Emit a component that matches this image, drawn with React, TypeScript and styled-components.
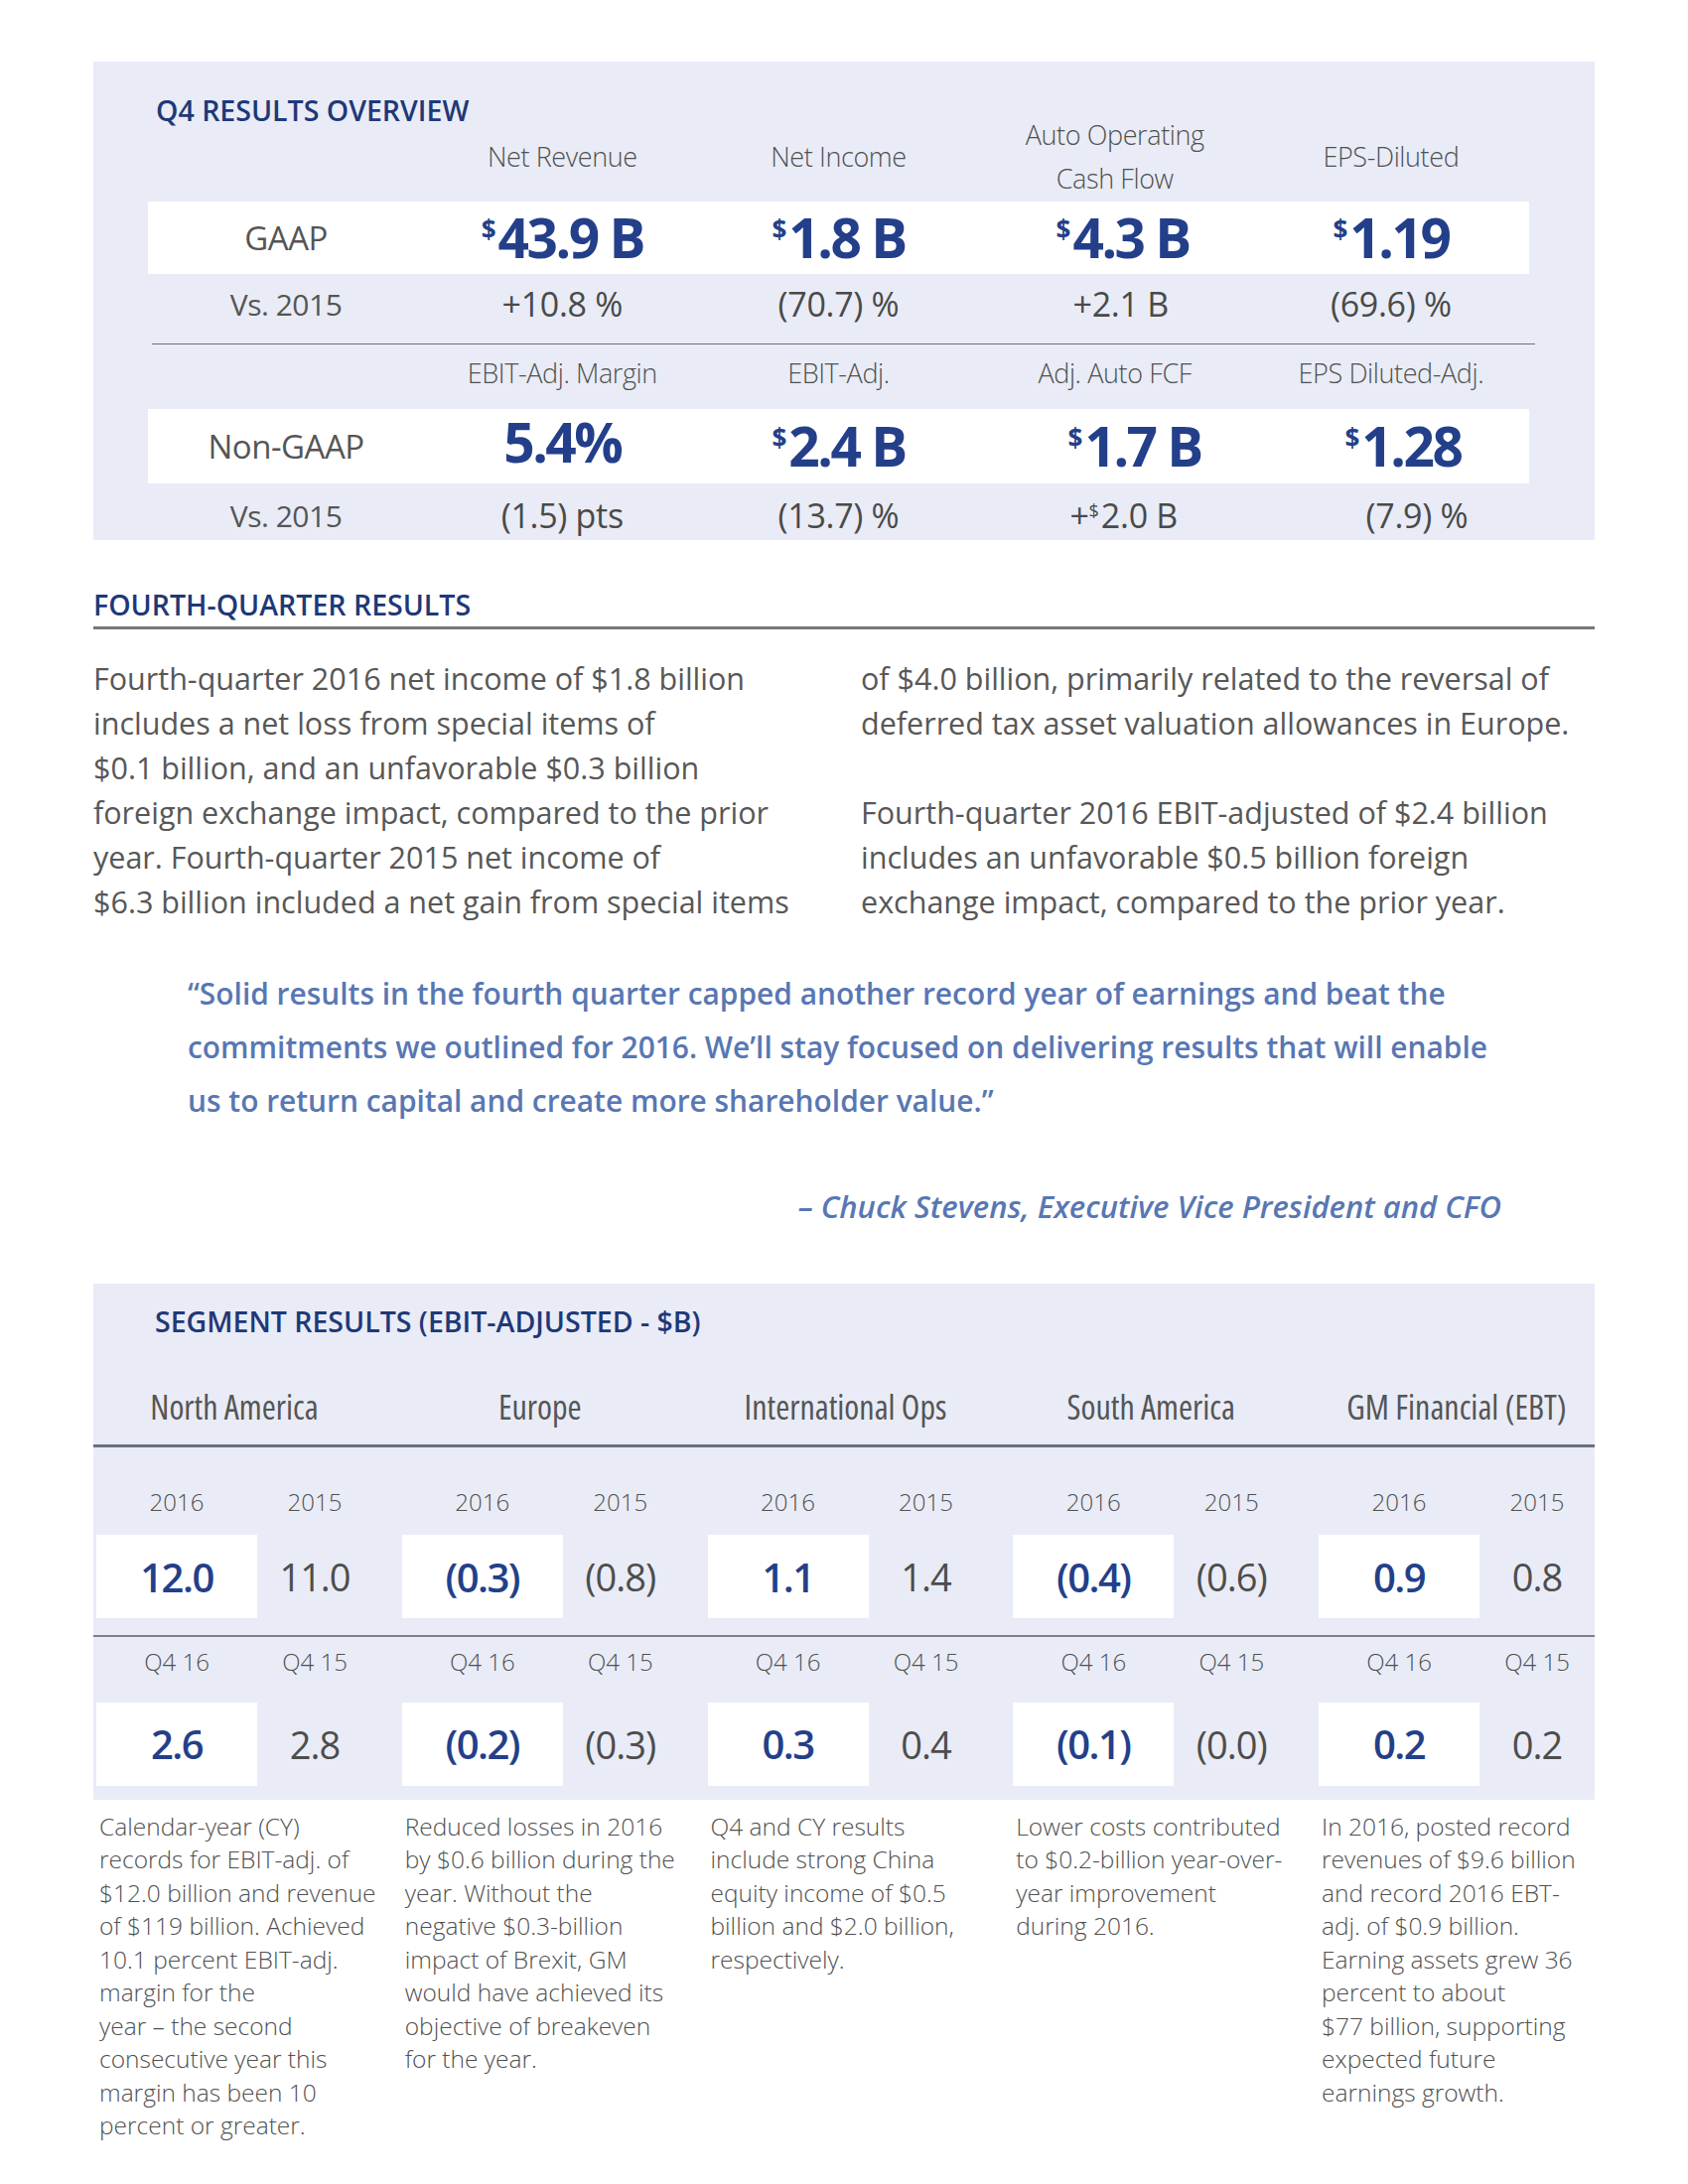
import React from "react";
import styled, { createGlobalStyle } from "styled-components";

const GlobalStyle = createGlobalStyle`
  html, body { margin: 0; padding: 0; background: #ffffff; }
  body { font-family: "Open Sans", "Noto Sans", sans-serif; color: #555555; }
  * { box-sizing: border-box; }
`;

const NAVY = "#1f3878";
const VALUE = "#243f8a";
const QUOTE = "#5877b3";
const GRAY = "#555555";
const PANEL = "#e9ecf6";

const Page = styled.div`
  width: 1700px;
  padding: 62px 94px 40px 94px;
`;

/* ---------- Overview panel ---------- */
const Panel = styled.section`
  background: ${PANEL};
  padding: 34px 66px 0 55px;
  height: 482px;
`;

const PanelTitle = styled.h2<{ $indent?: number }>`
  margin: 0;
  padding-left: ${(p) => p.$indent ?? 8}px;
  font-family: "Open Sans", sans-serif;
  font-weight: 600;
  font-size: 28.5px;
  line-height: 30px;
  letter-spacing: 0;
  color: ${NAVY};
`;

const Grid5 = styled.div`
  display: grid;
  grid-template-columns: repeat(5, 1fr);
  align-items: center;
`;

const HeaderRow = styled(Grid5)<{ $h: number; $mb: number }>`
  height: ${(p) => p.$h}px;
  grid-template-rows: ${(p) => p.$h}px;
  margin-bottom: ${(p) => p.$mb}px;
`;

const HeadLabel = styled.div`
  text-align: center;
  font-weight: 300;
  font-size: 27px;
  line-height: 44px;
  color: #505050;
  letter-spacing: -0.4px;
`;

const ValueRow = styled(Grid5)<{ $h: number }>`
  background: #ffffff;
  height: ${(p) => p.$h}px;
  grid-template-rows: ${(p) => p.$h}px;
`;

const RowLabel = styled.div<{ $size: number }>`
  text-align: center;
  font-size: ${(p) => p.$size}px;
  font-weight: 400;
  color: ${GRAY};
  letter-spacing: -0.5px;
`;

const BigValue = styled.div<{ $shift?: number }>`
  text-align: center;
  padding-left: ${(p) => (p.$shift ?? 0) * 2}px;
  padding-bottom: 10px;
  font-weight: 700;
  font-size: 55px;
  line-height: 62px;
  letter-spacing: -2.5px;
  color: ${VALUE};
`;

const Sup = styled.span<{ $size: number; $raise: number }>`
  font-size: ${(p) => p.$size}px;
  vertical-align: ${(p) => p.$raise}px;
  letter-spacing: 0;
  margin-right: 2px;
`;

const CompareRow = styled(Grid5)<{ $h: number; $pt?: number }>`
  height: ${(p) => p.$h}px;
  padding-top: ${(p) => p.$pt ?? 0}px;
`;

const CompareValue = styled.div<{ $shift?: number }>`
  text-align: center;
  padding-left: ${(p) => (p.$shift ?? 0) * 2}px;
  font-size: 34px;
  font-weight: 400;
  color: #4a4a4a;
  letter-spacing: -0.3px;
`;

const Divider = styled.hr`
  border: 0;
  height: 1px;
  background: #6f7080;
  margin: 10px -6px 0 4px;
`;

/* ---------- Fourth quarter ---------- */
const SectionHeading = styled.h2`
  margin: 48px 0 0 0;
  padding: 0 0 5px 0;
  border-bottom: 3px solid #777777;
  font-weight: 600;
  font-size: 28.5px;
  line-height: 34px;
  color: ${NAVY};
`;

const BodyColumns = styled.div`
  display: grid;
  grid-template-columns: 773px 1fr;
  margin-top: 27px;
`;

const BodyText = styled.p<{ $gap?: number }>`
  margin: ${(p) => p.$gap ?? 0}px 0 0 0;
  font-size: 30.5px;
  line-height: 45px;
  font-weight: 400;
  color: #575757;
  white-space: nowrap;
`;

const Quote = styled.blockquote`
  margin: 43px 0 0 0;
  padding-left: 95px;
  font-weight: 600;
  font-size: 29.9px;
  line-height: 54px;
  color: ${QUOTE};
  white-space: nowrap;
`;

const Attribution = styled.p`
  margin: 59px 0 0 0;
  padding-right: 94px;
  text-align: right;
  font-weight: 600;
  font-style: italic;
  font-size: 31px;
  line-height: 40px;
  color: ${QUOTE};
`;

/* ---------- Segment panel ---------- */
const SegPanel = styled.section`
  margin-top: 58px;
  background: ${PANEL};
  padding-top: 23px;
`;

const SegGrid = styled.div`
  display: grid;
  grid-template-columns: repeat(5, 278px);
  column-gap: 29.75px;
  padding-left: 3px;
`;

const RegionRow = styled(SegGrid)`
  margin-top: 45px;
  height: 52px;
  align-items: center;
`;

const RegionName = styled.div`
  text-align: center;
  font-stretch: 75%;
  font-weight: 400;
  font-size: 34px;
  color: ${GRAY};
`;

const SegRule = styled.hr<{ $thick?: boolean }>`
  border: 0;
  margin: ${(p) => (p.$thick ? "12px 0 0 0" : "0")};
  height: ${(p) => (p.$thick ? 3 : 1.5)}px;
  background: ${(p) => (p.$thick ? "#6b6e7c" : "#7d7f8c")};
`;

const PeriodBlock = styled(SegGrid)<{ $pt: number; $pb: number }>`
  padding-top: ${(p) => p.$pt}px;
  padding-bottom: ${(p) => p.$pb}px;
`;

const Pair = styled.div<{ $gap: number }>`
  display: grid;
  grid-template-columns: 162px 116px;
  grid-template-rows: 34px 84px;
  row-gap: ${(p) => p.$gap}px;
  align-items: center;
`;

const YearLabel = styled.div`
  text-align: center;
  font-weight: 300;
  font-size: 24px;
  color: #505050;
`;

const Box = styled.div<{ $current: boolean }>`
  height: 84px;
  display: flex;
  align-items: center;
  justify-content: center;
  background: ${(p) => (p.$current ? "#ffffff" : "transparent")};
  font-weight: ${(p) => (p.$current ? 600 : 400)};
  color: ${(p) => (p.$current ? VALUE : "#4d4d4d")};
  font-size: ${(p) => (p.$current ? 40 : 38)}px;
  letter-spacing: ${(p) => (p.$current ? -1.5 : -1)}px;
`;

const NotesRow = styled(SegGrid)`
  margin-top: 10px;
`;

const Note = styled.p`
  margin: 0;
  padding-left: 3px;
  font-weight: 300;
  font-size: 24.5px;
  line-height: 33.5px;
  color: #505050;
  white-space: nowrap;
`;

/* ---------- Data ---------- */
type Val = { sup?: string; text: string; shift?: number };

const gaapHeads = [["Net Revenue"], ["Net Income"], ["Auto Operating", "Cash Flow"], ["EPS-Diluted"]];
const gaapVals: Val[] = [
  { sup: "$", text: "43.9 B" },
  { sup: "$", text: "1.8 B" },
  { sup: "$", text: "4.3 B", shift: 8 },
  { sup: "$", text: "1.19" },
];
const gaapVs: Val[] = [{ text: "+10.8 %" }, { text: "(70.7) %" }, { text: "+2.1 B", shift: 6 }, { text: "(69.6) %" }];

const nonHeads = [["EBIT-Adj. Margin"], ["EBIT-Adj."], ["Adj. Auto FCF"], ["EPS Diluted-Adj."]];
const nonVals: Val[] = [
  { text: "5.4%" },
  { sup: "$", text: "2.4 B" },
  { sup: "$", text: "1.7 B", shift: 20 },
  { sup: "$", text: "1.28", shift: 12 },
];
const nonVs: Val[] = [
  { text: "(1.5) pts" },
  { text: "(13.7) %" },
  { text: "+", sup: "$", shift: 9 },
  { text: "(7.9) %", shift: 26 },
];

const segments = [
  { name: "North America", y: ["12.0", "11.0"], q: ["2.6", "2.8"] },
  { name: "Europe", y: ["(0.3)", "(0.8)"], q: ["(0.2)", "(0.3)"] },
  { name: "International Ops", y: ["1.1", "1.4"], q: ["0.3", "0.4"] },
  { name: "South America", y: ["(0.4)", "(0.6)"], q: ["(0.1)", "(0.0)"] },
  { name: "GM Financial (EBT)", y: ["0.9", "0.8"], q: ["0.2", "0.2"] },
];

const notes = [
  [
    "Calendar-year (CY)",
    "records for EBIT-adj. of",
    "$12.0 billion and revenue",
    "of $119 billion. Achieved",
    "10.1 percent EBIT-adj.",
    "margin for the",
    "year – the second",
    "consecutive year this",
    "margin has been 10",
    "percent or greater.",
  ],
  [
    "Reduced losses in 2016",
    "by $0.6 billion during the",
    "year. Without the",
    "negative $0.3-billion",
    "impact of Brexit, GM",
    "would have achieved its",
    "objective of breakeven",
    "for the year.",
  ],
  ["Q4 and CY results", "include strong China", "equity income of $0.5", "billion and $2.0 billion,", "respectively."],
  ["Lower costs contributed", "to $0.2-billion year-over-", "year improvement", "during 2016."],
  [
    "In 2016, posted record",
    "revenues of $9.6 billion",
    "and record 2016 EBT-",
    "adj. of $0.9 billion.",
    "Earning assets grew 36",
    "percent to about",
    "$77 billion, supporting",
    "expected future",
    "earnings growth.",
  ],
];

const Lines = ({ lines }: { lines: string[] }) => (
  <>
    {lines.map((l, i) => (
      <React.Fragment key={i}>
        {l}
        {i < lines.length - 1 && <br />}
      </React.Fragment>
    ))}
  </>
);

function ValueCell({ v }: { v: Val }) {
  return (
    <BigValue $shift={v.shift}>
      {v.sup && (
        <Sup $size={26} $raise={19}>
          {v.sup}
        </Sup>
      )}
      {v.text}
    </BigValue>
  );
}

function Overview() {
  return (
    <Panel>
      <PanelTitle>Q4 RESULTS OVERVIEW</PanelTitle>
      <HeaderRow $h={64} $mb={13}>
        <div />
        {gaapHeads.map((h, i) => (
          <HeadLabel key={i}>
            <Lines lines={h} />
          </HeadLabel>
        ))}
      </HeaderRow>
      <ValueRow $h={73}>
        <RowLabel $size={33}>GAAP</RowLabel>
        {gaapVals.map((v, i) => (
          <ValueCell key={i} v={v} />
        ))}
      </ValueRow>
      <CompareRow $h={60}>
        <RowLabel $size={30}>Vs. 2015</RowLabel>
        {gaapVs.map((v, i) => (
          <CompareValue key={i} $shift={v.shift}>
            {v.text}
          </CompareValue>
        ))}
      </CompareRow>
      <Divider />
      <HeaderRow $h={58} $mb={7}>
        <div />
        {nonHeads.map((h, i) => (
          <HeadLabel key={i}>
            <Lines lines={h} />
          </HeadLabel>
        ))}
      </HeaderRow>
      <ValueRow $h={75}>
        <RowLabel $size={33}>Non-GAAP</RowLabel>
        {nonVals.map((v, i) => (
          <ValueCell key={i} v={v} />
        ))}
      </ValueRow>
      <CompareRow $h={57} $pt={7}>
        <RowLabel $size={30}>Vs. 2015</RowLabel>
        {nonVs.map((v, i) => (
          <CompareValue key={i} $shift={v.shift}>
            {v.sup ? (
              <>
                {v.text}
                <Sup $size={18} $raise={11}>
                  {v.sup}
                </Sup>
                2.0 B
              </>
            ) : (
              v.text
            )}
          </CompareValue>
        ))}
      </CompareRow>
    </Panel>
  );
}

function FourthQuarter() {
  return (
    <>
      <SectionHeading>FOURTH-QUARTER RESULTS</SectionHeading>
      <BodyColumns>
        <div>
          <BodyText>
            <Lines
              lines={[
                "Fourth-quarter 2016 net income of $1.8 billion",
                "includes a net loss from special items of",
                "$0.1 billion, and an unfavorable $0.3 billion",
                "foreign exchange impact, compared to the prior",
                "year. Fourth-quarter 2015 net income of",
                "$6.3 billion included a net gain from special items",
              ]}
            />
          </BodyText>
        </div>
        <div>
          <BodyText>
            <Lines
              lines={[
                "of $4.0 billion, primarily related to the reversal of",
                "deferred tax asset valuation allowances in Europe.",
              ]}
            />
          </BodyText>
          <BodyText $gap={45}>
            <Lines
              lines={[
                "Fourth-quarter 2016 EBIT-adjusted of $2.4 billion",
                "includes an unfavorable $0.5 billion foreign",
                "exchange impact, compared to the prior year.",
              ]}
            />
          </BodyText>
        </div>
      </BodyColumns>
      <Quote>
        <Lines
          lines={[
            "“Solid results in the fourth quarter capped another record year of earnings and beat the",
            "commitments we outlined for 2016. We’ll stay focused on delivering results that will enable",
            "us to return capital and create more shareholder value.”",
          ]}
        />
      </Quote>
      <Attribution>– Chuck Stevens, Executive Vice President and CFO</Attribution>
    </>
  );
}

function Segments() {
  return (
    <SegPanel>
      <PanelTitle $indent={62}>SEGMENT RESULTS (EBIT-ADJUSTED - $B)</PanelTitle>
      <RegionRow>
        {segments.map((s) => (
          <RegionName key={s.name}>{s.name}</RegionName>
        ))}
      </RegionRow>
      <SegRule $thick />
      <PeriodBlock $pt={37} $pb={17}>
        {segments.map((s) => (
          <Pair key={s.name} $gap={17}>
            <YearLabel>2016</YearLabel>
            <YearLabel>2015</YearLabel>
            <Box $current>{s.y[0]}</Box>
            <Box $current={false}>{s.y[1]}</Box>
          </Pair>
        ))}
      </PeriodBlock>
      <SegRule />
      <PeriodBlock $pt={8} $pb={14}>
        {segments.map((s) => (
          <Pair key={s.name} $gap={24}>
            <YearLabel>Q4 16</YearLabel>
            <YearLabel>Q4 15</YearLabel>
            <Box $current>{s.q[0]}</Box>
            <Box $current={false}>{s.q[1]}</Box>
          </Pair>
        ))}
      </PeriodBlock>
    </SegPanel>
  );
}

export default function App() {
  return (
    <Page>
      <GlobalStyle />
      <Overview />
      <FourthQuarter />
      <Segments />
      <NotesRow>
        {notes.map((n, i) => (
          <Note key={i}>
            <Lines lines={n} />
          </Note>
        ))}
      </NotesRow>
    </Page>
  );
}
